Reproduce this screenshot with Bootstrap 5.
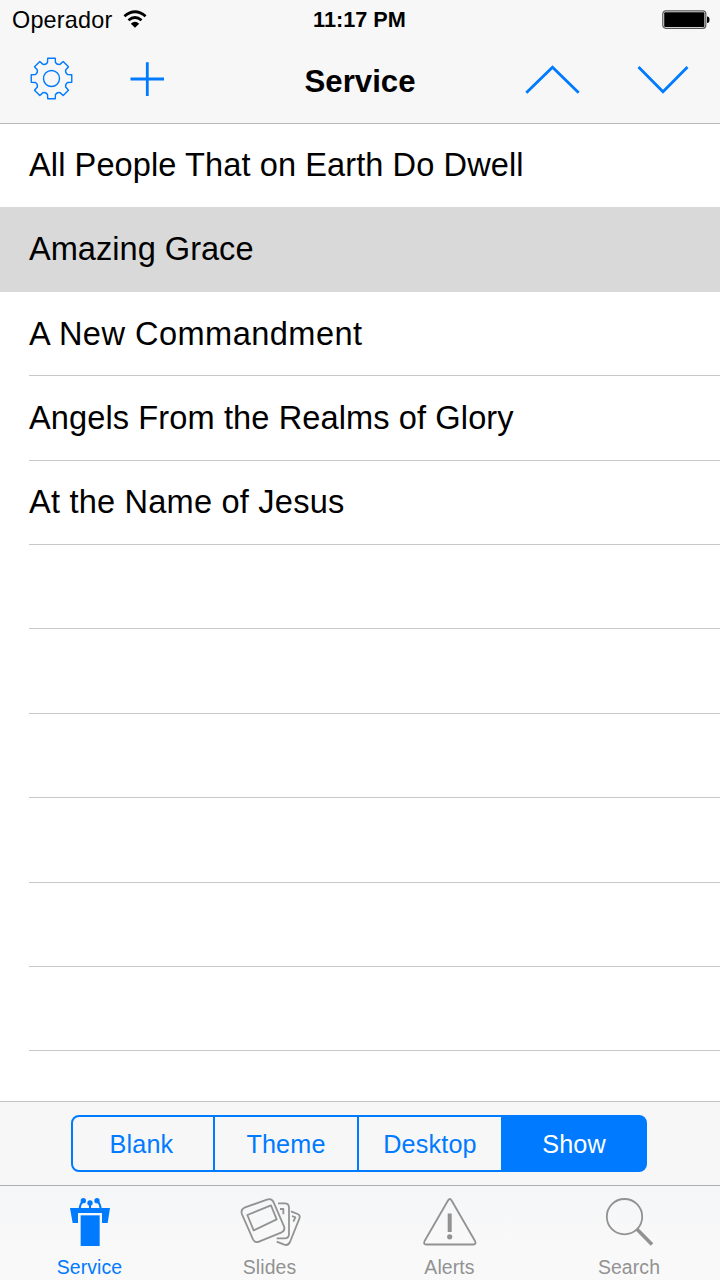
<!DOCTYPE html>
<html lang="en">
<head>
<meta charset="utf-8">
<meta name="viewport" content="width=device-width, initial-scale=1">
<title>Service</title>
<link rel="stylesheet" href="https://cdn.jsdelivr.net/npm/bootstrap@5.3.0/dist/css/bootstrap.min.css">
<style>
body{font-family:"Liberation Sans",Arial,sans-serif;color:#000;background:#fff;line-height:1}
.app{width:720px;height:1280px}
.top-bar{height:124px;background:#f7f7f7;border-bottom:1px solid #b9b9b9}
.status{height:40px;display:grid;grid-template-columns:1fr auto 1fr;padding:0 10px 0 12px}
.carrier{font-size:23.4px;letter-spacing:.2px}
.carrier span{padding-top:1px}
.clock{font-size:21.7px;margin-right:3px}
.tools{height:80px;display:grid;grid-template-columns:1fr auto 1fr;padding:0 29px}
.tools h1{font-size:31.2px;margin:0;line-height:83px}
.blue{color:#007aff}
svg{display:block;fill:none;stroke:currentColor}
.tools button{background:none;border:0;padding:0 0 6px;color:#007aff}
.songs{height:977px}
.songs .list-group-item{height:84.4px;flex:none;padding:0 0 0 29px;border:0;background:none;color:#000;font-size:32.6px}
.songs .list-group-item>span{height:100%;border-bottom:1px solid #c8c7cc;display:flex;align-items:center;padding-top:1px}
.songs .list-group-item:first-child{height:83.4px;letter-spacing:.08px}
.songs .list-group-item:nth-child(3){letter-spacing:.45px}
.songs .list-group-item:nth-child(4){letter-spacing:.1px}
.songs .list-group-item:nth-child(5){letter-spacing:.2px}
.songs .list-group-item:first-child>span,.songs .chosen>span,.songs .list-group-item:last-child>span{border-color:transparent}
.songs .chosen{background:#d9d9d9}
.seg-bar{height:84px;background:#f7f7f7;border-top:1px solid #c4c4c4;padding:13px 73px 0 71px}
.seg-bar .btn-group{height:57px;width:576px}
.seg-bar .btn{--bs-btn-color:#007aff;--bs-btn-border-color:#007aff;--bs-btn-active-bg:#007aff;--bs-btn-active-border-color:#007aff;--bs-btn-active-color:#fff;border-width:2px;font-size:25.2px;line-height:1;padding:2px 0 0;border-radius:8px;flex:0 0 146px;letter-spacing:.15px}
.seg-bar .btn:first-child{flex-basis:144px;padding-right:3px}
.seg-bar .btn-group>.btn:not(:first-child){margin-left:-2px}
.tabs{height:95px;background:linear-gradient(#f5f6f8,#f9f9f9 70%);border-top:1px solid #adadad;color:#929292;font-size:19.4px}
.tabs a{color:inherit;text-decoration:none;padding-top:6px;flex:1 1 0}
.tabs a.blue{color:#007aff}
.tabs a>span{margin-top:6px;margin-right:1px;letter-spacing:.12px}
.tabs a:last-child>span{margin-right:2px}
</style>
<script src="https://cdn.jsdelivr.net/npm/bootstrap@5.3.0/dist/js/bootstrap.bundle.min.js"></script>
</head>
<body>
<div class="app d-flex flex-column overflow-hidden">
<header class="top-bar flex-shrink-0">
 <div class="status align-items-center">
  <div class="d-flex align-items-center carrier"><span>Operador</span>
   <svg class="ms-2" width="30" height="24" viewBox="0 0 30 24" stroke-width="2.8"><path d="M4.400 8.300Q15 -.8 25.600 8.300M8.500 12.300Q15 6.800 21.500 12.300"/><path d="M10.800 15.700Q15 12 19.200 15.700L15 19.800Z" fill="currentColor" stroke="none"/></svg>
  </div>
  <strong class="clock">11:17 PM</strong>
  <svg class="ms-auto" width="48" height="20" viewBox="0 0 48 20"><rect x=".8" y=".8" width="43" height="17.500" rx="3" stroke="#555" stroke-width="1.200"/><rect x="2.200" y="2.200" width="40.200" height="14.700" rx="1" fill="#000" stroke="none"/><path d="M45 6.500q2.500 0 2.500 3.200t-2.500 3.200z" fill="#000" stroke="none"/></svg>
 </div>
 <div class="tools">
  <div class="d-flex">
   <button aria-label="Settings"><svg width="46" height="46" viewBox="-22.5 -22.5 46 46" stroke-width="1.400" stroke-linejoin="round"><circle r="8"/><path id="gear" d=""/></svg></button>
   <button aria-label="Add" style="margin-left:54px"><svg width="36" height="36" viewBox="0 0 36 36" stroke-width="2.800"><path d="M1.500 18H35M18.300 1.200V35"/></svg></button>
  </div>
  <h1 class="fw-bold">Service</h1>
  <div class="d-flex justify-content-end">
   <button aria-label="Previous"><svg width="56" height="32" viewBox="0 0 56 32" stroke-width="2.800"><path d="M1.300 29.800L27.500 4.300L53.700 29.800"/></svg></button>
   <button aria-label="Next" style="margin-left:56px"><svg width="54" height="32" viewBox="0 0 54 32" stroke-width="2.800"><path d="M1.500 4L26 28.800L50.500 4"/></svg></button>
  </div>
 </div>
</header>
<ul class="list-group list-group-flush songs flex-shrink-0 overflow-hidden">
 <li class="list-group-item"><span>All People That on Earth Do Dwell</span></li>
 <li class="list-group-item chosen"><span>Amazing Grace</span></li>
 <li class="list-group-item"><span>A New Commandment</span></li>
 <li class="list-group-item"><span>Angels From the Realms of Glory</span></li>
 <li class="list-group-item"><span>At the Name of Jesus</span></li>
 <li class="list-group-item"><span></span></li><li class="list-group-item"><span></span></li><li class="list-group-item"><span></span></li>
 <li class="list-group-item"><span></span></li><li class="list-group-item"><span></span></li><li class="list-group-item"><span></span></li>
 <li class="list-group-item"></li>
</ul>
<div class="seg-bar flex-shrink-0">
 <div class="btn-group">
  <button class="btn">Blank</button><button class="btn">Theme</button><button class="btn">Desktop</button><button class="btn active">Show</button>
 </div>
</div>
<nav class="tabs d-flex flex-shrink-0">
 <a href="#" class="blue d-flex flex-column align-items-center">
  <svg width="60" height="60" viewBox="0 6 180 180"><g fill="currentColor" stroke="none"><path d="M30 54H150L143 99H126V69H54V99H38Z"/><path d="M62 76H119V168H62Z"/><circle cx="70" cy="32" r="8"/><circle cx="90" cy="39" r="8"/><circle cx="111" cy="32" r="8"/></g><path d="M69 33Q60 42 59 56M90 39V56M112 33Q121 42 122 56" stroke-width="6"/></svg><span>Service</span></a>
 <a href="#" class="d-flex flex-column align-items-center">
  <svg width="70" height="60" viewBox="0 0 210 180" stroke-width="5.300" stroke-linejoin="round"><path d="M28 47L96 23Q110 18 116 31L147 103Q151 115 140 121L72 149Q60 154 54 142L21 67Q16 53 28 47ZM37 69L108 40L125 82L56 115Z"/><path d="M129 34H149Q162 34 162 47V126Q162 139 149 139H125M135 51H145V67M168 58L188 66Q197 70 193 80L165 150Q159 162 148 158L125 149M171 72L181 76L175 89"/></svg><span>Slides</span></a>
 <a href="#" class="d-flex flex-column align-items-center">
  <svg width="60" height="60" viewBox="0 2 60 60" stroke-width="1.800" stroke-linejoin="round"><path d="M28 10.500Q29.800 7.500 31.600 10.500L55 51Q56.600 54.500 53.300 54.500H6.300Q3 54.500 4.600 51Z"/><path d="M29.700 23.500V42" stroke-width="4"/><circle cx="29.700" cy="46.800" r="2.600" fill="currentColor" stroke="none"/></svg><span>Alerts</span></a>
 <a href="#" class="d-flex flex-column align-items-center">
  <svg width="60" height="60" viewBox="0 2 60 60" stroke-width="1.800"><circle cx="24.500" cy="26.700" r="17.700"/><path d="M37 39.200L52 54.500" stroke-width="3.600"/></svg><span>Search</span></a>
</nav>
</div>
<script>
// Eight flat teeth joined by concave valleys.
let d='';
for(let i=0;i<8;i++){
 const t=i*45,p=(r,a)=>{const q=(t+a)*Math.PI/180;return (r*Math.sin(q)).toFixed(2)+' '+(-r*Math.cos(q)).toFixed(2)};
 d+=(i?'L':'M')+p(16.5,-14)+'L'+p(20.6,-10.5)+'L'+p(20.6,10.5)+'L'+p(16.5,14)+'Q'+p(14.7,22.5)+' '+p(16.5,31);
}
document.getElementById('gear').setAttribute('d',d+'Z');
</script>
</body>
</html>
